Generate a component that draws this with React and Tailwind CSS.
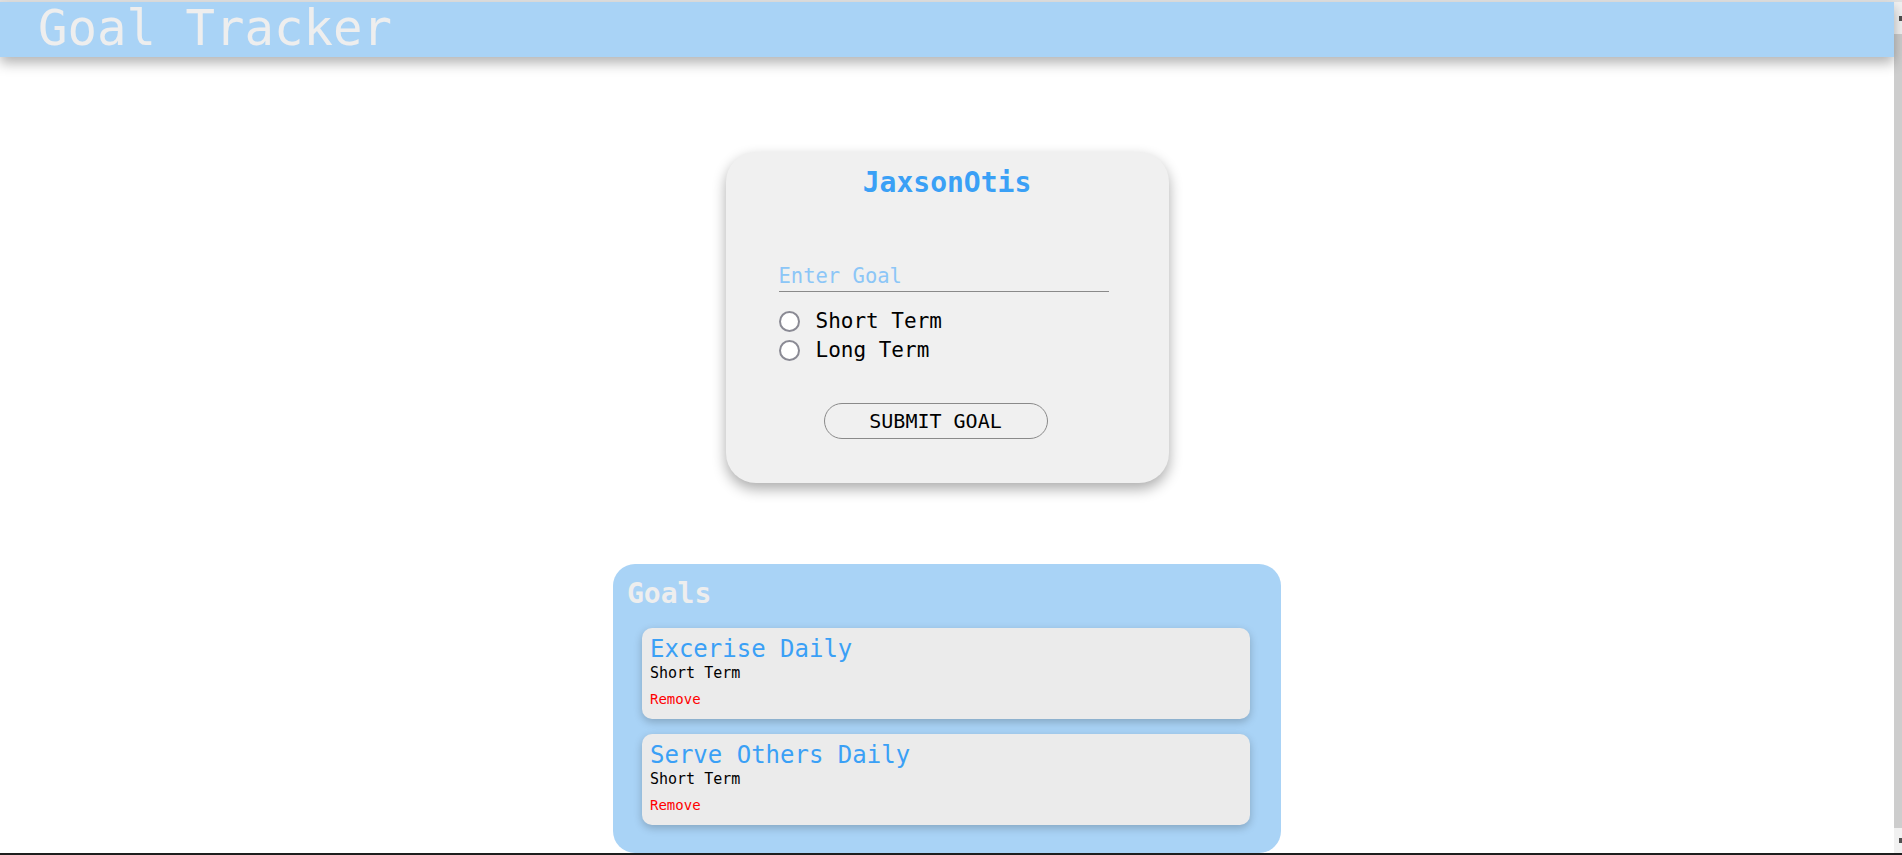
import React from "react";

const mono = { fontFamily: '"DejaVu Sans Mono", "Liberation Mono", monospace' };

function Radio({ label }) {
  return (
    <div className="flex items-center h-[29px]">
      <span className="w-[21px] h-[21px] rounded-full border-[2.5px] border-[#8a8a94] bg-white box-border shrink-0" />
      <span className="ml-[16px] text-[21px] text-black leading-[29px]">{label}</span>
    </div>
  );
}

function GoalCard({ title, term }) {
  return (
    <div className="w-[608px] h-[91px] rounded-[10px] bg-[#ebebeb] shadow-[0_3px_8px_rgba(0,0,0,0.22)] pl-[8px] pt-[9px] flex flex-col">
      <div className="text-[24px] leading-none text-[#3aa0f6]">{title}</div>
      <div className="text-[15px] leading-none text-black mt-[5px]">{term}</div>
      <div className="text-[14px] leading-none text-[#ff0000] mt-[11px]">Remove</div>
    </div>
  );
}

export default function App() {
  return (
    <div className="w-[1902px] h-[855px] overflow-hidden bg-white flex flex-col" style={mono}>
      <div className="h-[2px] bg-[#e2e2e2] shrink-0" />
      <div className="flex flex-row flex-1 min-h-0">
        <div className="flex-1 flex flex-col min-w-0">
          <header className="h-[55px] bg-[#a9d3f6] shadow-[0_6px_12px_rgba(0,0,0,0.3)] pl-[38px] pt-[2px] relative z-10 shrink-0">
            <h1 className="text-[49px] leading-none text-[#eeeeee]">Goal Tracker</h1>
          </header>
          <main className="flex flex-col items-center">
            <section className="mt-[95px] w-[443px] h-[331px] rounded-[30px] bg-[#f0f0f0] shadow-[0_6px_14px_rgba(0,0,0,0.33)] pt-[17px] pl-[53px] flex flex-col">
              <div className="w-[337px] text-center text-[28px] leading-none font-bold text-[#3aa0f6]">JaxsonOtis</div>
              <input
                type="text"
                placeholder="Enter Goal"
                className="mt-[63px] w-[330px] h-[32px] bg-transparent border-0 border-b border-[#8a8a8a] outline-none text-[20.5px] text-black placeholder:text-[#8cc6f7] p-0"
                style={mono}
              />
              <div className="mt-[15px] flex flex-col">
                <Radio label="Short Term" />
                <Radio label="Long Term" />
              </div>
              <button
                className="mt-[38px] ml-[45px] w-[224px] h-[36px] rounded-full border border-[#8a8a8a] bg-[#f0f0f0] text-[20px] text-black leading-none"
                style={mono}
              >
                SUBMIT GOAL
              </button>
            </section>
            <section className="mt-[81px] w-[668px] h-[289px] rounded-[22px] bg-[#a9d3f6] pt-[16px] flex flex-col">
              <h2 className="pl-[14px] text-[28px] leading-none text-[#eeeeee] font-bold">Goals</h2>
              <div className="mt-[20px] flex flex-col gap-[15px] pl-[29px]">
                <GoalCard title="Excerise Daily" term="Short Term" />
                <GoalCard title="Serve Others Daily" term="Short Term" />
              </div>
            </section>
          </main>
        </div>
        <div className="w-[8px] flex flex-col bg-[#f1f1f1] shrink-0">
          <div className="h-[32px] flex items-center justify-end">
            <span className="w-[3px] h-[5px] bg-[#505050]" />
          </div>
          <div className="flex-1 bg-[#cdcdcd]" />
          <div className="h-[25px] flex items-center justify-end">
            <span className="w-[3px] h-[5px] bg-[#505050]" />
          </div>
        </div>
      </div>
      <div className="h-[2px] bg-[#1e1e1e] shrink-0" />
    </div>
  );
}
